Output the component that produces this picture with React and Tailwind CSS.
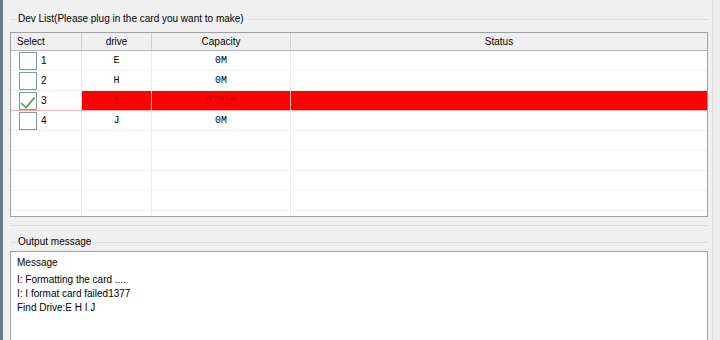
import React from 'react';

const devices = [
  { id: 1, drive: 'E', capacity: '0M', checked: false, failed: false },
  { id: 2, drive: 'H', capacity: '0M', checked: false, failed: false },
  { id: 3, drive: 'I', capacity: '3781M', checked: true, failed: true },
  { id: 4, drive: 'J', capacity: '0M', checked: false, failed: false },
];

const messages = ['I: Formatting the card ....', 'I: I format card failed1377', 'Find Drive:E H I J'];

const GroupTitle = ({ children }) => (
  <div className="flex items-center h-[14px]">
    <div className="w-[6px] h-px bg-[#dcdcdc]" />
    <span className="px-[2px] leading-[14px] whitespace-nowrap">{children}</span>
    <div className="flex-1 h-px bg-[#dcdcdc]" />
  </div>
);

const CheckBox = ({ checked }) => (
  <div className="w-[18px] h-[18px] border border-[#8497a8] bg-white relative">
    {checked && (
      <svg width="18" height="18" viewBox="0 0 18 18" className="absolute -left-px -top-px">
        <polyline points="2,11 7,15.5 15.5,5.5" fill="none" stroke="#4e9a4e" strokeWidth="1.6" />
      </svg>
    )}
  </div>
);

const App = () => {
  const emptyRows = [5, 6, 7, 8];

  return (
    <div className="w-[720px] h-[340px] bg-[#f0f0f0] flex overflow-hidden text-[10px] text-black font-['Liberation_Sans',Arial,sans-serif]">
      <div className="w-[3px] bg-[#687a8b]" />

      <div className="w-[698px] ml-[7px] flex flex-col">
        {/* Dev list group */}
        <div className="mt-[12px]">
          <GroupTitle>Dev List(Please plug in the card you want to make)</GroupTitle>
        </div>

        <div className="mt-[6px] h-[185px] border border-[#a0a0a0] bg-white overflow-hidden">
          <div className="flex h-[18px] bg-[#f0f0f0] border-b border-[#b4b4b4] leading-[17px]">
            <div className="w-[71px] border-r border-[#d0d0d0] pl-[6px]">Select</div>
            <div className="w-[70px] border-r border-[#d0d0d0] text-center">drive</div>
            <div className="w-[139px] border-r border-[#d0d0d0] text-center">Capacity</div>
            <div className="flex-1 text-center">Status</div>
          </div>

          {devices.map((d) => (
            <div key={d.id} className={`flex h-[20px] border-b ${d.failed ? 'border-[#ffb0b0]' : 'border-[#f0f0f0]'}`}>
              <div className="w-[71px] border-r border-[#ececec] flex items-center pl-[8px]">
                <CheckBox checked={d.checked} />
                <span className="ml-[4px]">{d.id}</span>
              </div>
              <div
                className={`w-[70px] border-r flex items-center justify-center font-['Liberation_Mono',monospace] ${
                  d.failed ? 'bg-[#ff0000] text-[#c00000] border-[#ffc8c8]' : 'border-[#ececec]'
                }`}
              >
                {d.drive}
              </div>
              <div
                className={`w-[139px] border-r flex items-center justify-center font-['Liberation_Mono',monospace] ${
                  d.failed ? 'bg-[#ff0000] text-[#c00000] border-[#ffc8c8]' : 'border-[#ececec]'
                }`}
              >
                {d.capacity}
              </div>
              <div className={`flex-1 ${d.failed ? 'bg-[#ff0000]' : ''}`} />
            </div>
          ))}

          {emptyRows.map((r) => (
            <div key={r} className="flex h-[20px] border-b border-[#f0f0f0]">
              <div className="w-[71px] border-r border-[#ececec]" />
              <div className="w-[70px] border-r border-[#ececec]" />
              <div className="w-[139px] border-r border-[#ececec]" />
              <div className="flex-1" />
            </div>
          ))}
          <div className="flex h-[5px]">
            <div className="w-[71px] border-r border-[#ececec]" />
            <div className="w-[70px] border-r border-[#ececec]" />
            <div className="w-[139px] border-r border-[#ececec]" />
          </div>
        </div>

        <div className="mt-[8px] h-px bg-[#dcdcdc]" />

        {/* Output group */}
        <div className="mt-[9px]">
          <GroupTitle>Output message</GroupTitle>
        </div>

        <div className="mt-[2px] flex-1 border border-b-0 border-[#a0a0a0] bg-white pl-[6px] pt-[4px]">
          <div className="leading-[14px]">Message</div>
          <div className="mt-[3px]">
            {messages.map((m) => (
              <div key={m} className="leading-[14px]">{m}</div>
            ))}
          </div>
        </div>
      </div>

      <div className="ml-[4px] flex-1 border-l border-[#dadada] bg-[#ebebeb]" />
    </div>
  );
};

export default App;
